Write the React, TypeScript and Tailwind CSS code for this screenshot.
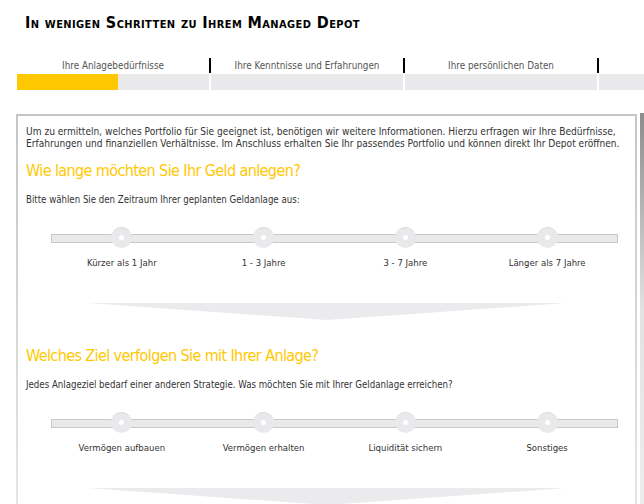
import React from 'react';

type Question = {
  title: string;
  hint: string;
  options: string[];
};

const steps = ['Ihre Anlagebedürfnisse', 'Ihre Kenntnisse und Erfahrungen', 'Ihre persönlichen Daten', ''];

const questions: Question[] = [
  {
    title: 'Wie lange möchten Sie Ihr Geld anlegen?',
    hint: 'Bitte wählen Sie den Zeitraum Ihrer geplanten Geldanlage aus:',
    options: ['Kürzer als 1 Jahr', '1 - 3 Jahre', '3 - 7 Jahre', 'Länger als 7 Jahre'],
  },
  {
    title: 'Welches Ziel verfolgen Sie mit Ihrer Anlage?',
    hint: 'Jedes Anlageziel bedarf einer anderen Strategie. Was möchten Sie mit Ihrer Geldanlage erreichen?',
    options: ['Vermögen aufbauen', 'Vermögen erhalten', 'Liquidität sichern', 'Sonstiges'],
  },
];

const StepTabs: React.FC = () => (
  <div className="flex ml-[17px] mt-[24px]">
    {steps.map((label, i) => (
      <div key={i} className={i === 3 ? 'flex-1 flex flex-col' : 'w-[194px] flex flex-col shrink-0'}>
        <div className="h-[17px] flex items-center">
          <span className="flex-1 text-center text-[9.8px] leading-[12px] text-[#555] whitespace-nowrap">{label}</span>
          {i < 3 && <span className="w-[2px] h-[15px] bg-black" />}
        </div>
        <div className={`h-[16px] bg-[#e9e9eb] ${i < 3 ? 'mr-[2px]' : ''}`}>
          {i === 0 && <div className="h-full w-[101px] bg-[#ffc800]" />}
        </div>
      </div>
    ))}
  </div>
);

const Slider: React.FC<{ options: string[] }> = ({ options }) => (
  <div className="ml-[25px] w-[567px]">
    <div className="relative h-[22px]">
      <div className="absolute left-0 right-0 top-[8px] h-[9px] bg-[#e9e9eb] border border-[#c8c8c8]" />
      <div className="relative grid grid-cols-4 h-full">
        {options.map((o) => (
          <div key={o} className="flex justify-center items-center">
            <div className="w-[21px] h-[21px] rounded-full bg-[#e9e9eb] border-t border-[#dadadc] flex items-center justify-center">
              <div className="w-[5px] h-[5px] rounded-full bg-white" />
            </div>
          </div>
        ))}
      </div>
    </div>
    <div className="grid grid-cols-4 mt-[9px]">
      {options.map((o) => (
        <div key={o} className="text-center text-[9.5px] leading-[12px] text-[#333] whitespace-nowrap">{o}</div>
      ))}
    </div>
  </div>
);

const DownArrow: React.FC = () => (
  <svg className="block ml-[62px] mt-[34px]" width="478" height="17" viewBox="0 0 478 17">
    <polygon points="0,0 478,0 239,17" fill="#ebebed" />
  </svg>
);

export default function App() {
  return (
    <div
      className="relative w-[644px] h-[504px] overflow-hidden bg-white"
      style={{ fontFamily: '"DejaVu Sans Condensed", "DejaVu Sans", sans-serif' }}
    >
      <h1 className="pl-[25px] pt-[13px] text-[16px] leading-[20px] font-bold text-black [font-variant:small-caps] tracking-[0.4px]">
        In wenigen Schritten zu Ihrem Managed Depot
      </h1>

      <StepTabs />

      <div className="ml-[16px] mt-[24px] w-[621px] p-[2px] pb-0 bg-gradient-to-b from-[#c6c6c6] to-[#e6e6e6] h-[400px]">
        <div className="bg-white h-full px-[8px] pt-[10px]">
          <p className="text-[10.1px] leading-[12px] text-[#333] whitespace-nowrap">
            Um zu ermitteln, welches Portfolio für Sie geeignet ist, benötigen wir weitere Informationen. Hierzu erfragen wir Ihre Bedürfnisse,
            <br />
            Erfahrungen und finanziellen Verhältnisse. Im Anschluss erhalten Sie Ihr passendes Portfolio und können direkt Ihr Depot eröffnen.
          </p>

          {questions.map((q, i) => (
            <section key={q.title} className={i === 0 ? 'mt-[11px]' : 'mt-[26px]'}>
              <h2 className="text-[16px] leading-[20px] tracking-[-0.6px] text-[#ffc800]">{q.title}</h2>
              <p className="mt-[13px] mb-[20px] text-[9.6px] leading-[12px] text-[#333]">{q.hint}</p>
              <Slider options={q.options} />
              <DownArrow />
            </section>
          ))}
        </div>
      </div>

      {/* edge shadow at the right of the page */}
      <div className="absolute right-0 top-[113px] w-[4px] h-[391px] bg-gradient-to-b from-[#8c8c8c] via-[#e2e2e2] to-[#ededed]" />
    </div>
  );
}
